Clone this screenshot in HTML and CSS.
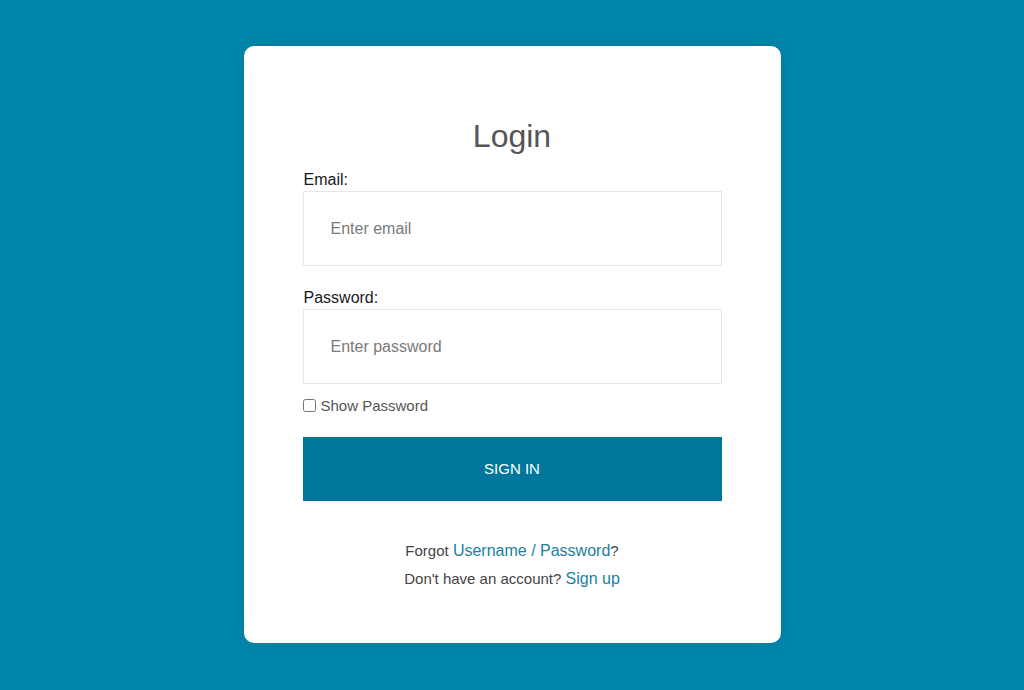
FILE: index.html
```html
<!DOCTYPE html>
<html lang="en">
<head>
<meta charset="utf-8">
<title>Login</title>
<link rel="stylesheet" href="styles.css">
</head>
<body>
<main class="card">
  <h1 class="title">Login</h1>
  <form class="form">
    <label class="label" for="email">Email:</label>
    <input class="field" id="email" type="email" placeholder="Enter email">
    <label class="label label-pass" for="password">Password:</label>
    <input class="field" id="password" type="password" placeholder="Enter password">
    <label class="show">
      <input class="check" type="checkbox">
      <span>Show Password</span>
    </label>
    <button class="btn" type="button">SIGN IN</button>
  </form>
  <div class="footer">
    <p class="line">Forgot <a href="#" class="link">Username / Password</a>?</p>
    <p class="line">Don't have an account? <a href="#" class="link">Sign up</a></p>
  </div>
</main>
</body>
</html>
```

FILE: styles.css
```css
* { box-sizing: border-box; }
html, body { margin: 0; padding: 0; }
body {
  background: #0087ab;
  font-family: "Liberation Sans", Arial, sans-serif;
  min-height: 690px;
  display: flex;
  align-items: flex-start;
  justify-content: center;
  padding-top: 46px;
}
.card {
  width: 537px;
  background: #ffffff;
  border-radius: 10px;
  padding: 70px 59px 50px;
  box-shadow: 0 0 24px rgba(0, 0, 0, 0.1);
}
.title {
  margin: 0;
  font-size: 32px;
  line-height: 40px;
  font-weight: 400;
  color: #555555;
  text-align: center;
}
.form {
  display: flex;
  flex-direction: column;
  margin-top: 15px;
}
.label {
  display: block;
  font-size: 16px;
  line-height: 18px;
  color: #1a1a1a;
  margin: 0 0 2px 1px;
}
.label-pass { margin-top: 23px; }
.field {
  display: block;
  width: 100%;
  height: 75px;
  border: 1px solid #e6e6e6;
  border-radius: 0;
  padding: 0 27px;
  font-family: "Liberation Sans", Arial, sans-serif;
  font-size: 16px;
  color: #333;
  outline: none;
  background: #fff;
}
.field::placeholder { color: #7a7a7a; }
.show {
  display: flex;
  align-items: center;
  gap: 5px;
  margin-top: 12px;
  height: 18px;
  font-size: 15px;
  color: #555555;
}
.check {
  margin: 0;
  width: 13px;
  height: 13px;
}
.btn {
  margin-top: 23px;
  height: 64px;
  width: 100%;
  border: none;
  border-radius: 0;
  background: #00779a;
  color: #ffffff;
  font-family: "Liberation Sans", Arial, sans-serif;
  font-size: 15px;
  padding: 0 0 2px;
  cursor: pointer;
}
.footer {
  margin-top: 36px;
  text-align: center;
}
.line {
  margin: 0;
  font-size: 15px;
  line-height: 28px;
  color: #444444;
}
.link {
  font-size: 16px;
  color: #1a7fa0;
  text-decoration: none;
}
```
